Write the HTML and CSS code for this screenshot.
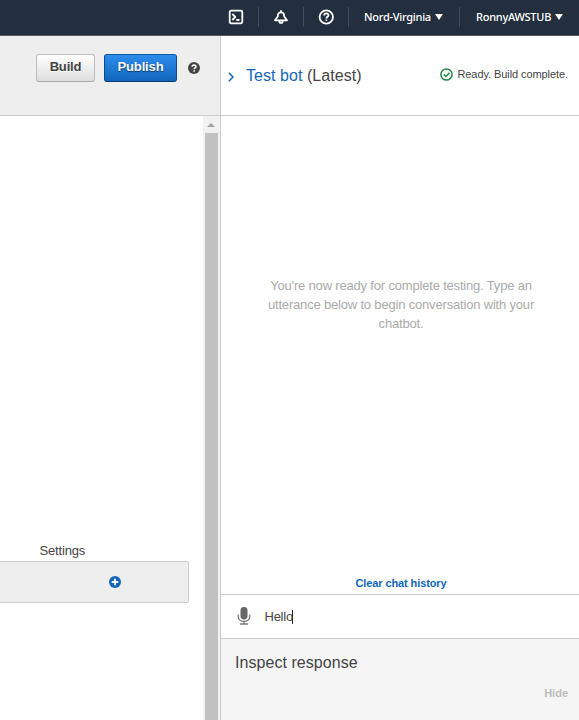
FILE: index.html
```html
<!DOCTYPE html>
<html lang="en">
<head>
<meta charset="utf-8">
<title>Test bot</title>
<link rel="stylesheet" href="styles.css">
</head>
<body>
<header class="topbar">
  <a class="nav-icon shell"><svg width="16" height="16" viewBox="0 0 16 16"><rect x="1.700" y="1.700" width="12.600" height="12.600" rx="1.500"/><path d="M4.300 5 7.300 8l-3 3M8.300 11h3.200"/></svg></a>
  <a class="nav-icon bell"><svg width="16" height="16" viewBox="0 0 16 16"><path d="M8 1.200v2M4.800 7.500C4.800 4.500 6 3.300 8 3.300s3.200 1.200 3.200 4.200L14 11.300H2zM6.300 12.200c0 2.300 3.400 2.300 3.400 0"/></svg></a>
  <a class="nav-icon help"><svg width="16" height="16" viewBox="0 0 16 16"><circle cx="8.300" cy="8" r="6.700"/><path d="M6.200 6.500c0-2.700 4.300-2.700 4.300-.2 0 1.500-2.100 1.500-2.100 3.100M8.400 10.600v1.300"/></svg></a>
  <a class="nav-text region"><span>Nord-Virginia</span><i class="caret"></i></a>
  <a class="nav-text account"><span>RonnyAWSTUB</span><i class="caret"></i></a>
</header>
<main class="workspace">
  <section class="editor">
    <div class="toolbar">
      <button class="btn">Build</button>
      <button class="btn primary">Publish</button>
      <svg class="info" width="12" height="12" viewBox="0 0 12 12"><circle cx="6" cy="6" r="6" fill="#444"/><path d="M4.100 4.700c0-2.400 3.900-2.300 3.900-.1C8 5.900 6.100 5.800 6.100 7.300M6.100 8.300v1.500" fill="none" stroke="#fff" stroke-width="1.500"/></svg>
    </div>
    <div class="canvas">
      <div class="content">
        <div class="settings-label">Settings</div>
        <div class="settings-row"><svg width="12" height="12" viewBox="0 0 12 12"><circle cx="6" cy="6" r="6" fill="#1166bb"/><path d="M6 2.700v6.600M2.700 6h6.600" stroke="#fff" stroke-width="1.800"/></svg></div>
      </div>
      <div class="scrollbar"><i class="arrow-up"></i><div class="thumb"></div></div>
    </div>
  </section>
  <aside class="tester">
    <div class="tester-head">
      <svg class="chevron" width="6" height="10" viewBox="0 0 6 10"><path d="M.8.8 5 5 .8 9.200" fill="none" stroke="#1166bb" stroke-width="1.500"/></svg>
      <h2><a>Test bot</a> (Latest)</h2>
      <div class="status"><svg width="13" height="13" viewBox="0 0 13 13"><circle cx="6.500" cy="6.500" r="5.600"/><path d="M3.800 6.500 5.900 8.500 9.500 4.700"/></svg><span>Ready. Build complete.</span></div>
    </div>
    <div class="chat">
      <p>You're now ready for complete testing. Type an<br>utterance below to begin conversation with your<br>chatbot.</p>
      <a class="clear">Clear chat history</a>
    </div>
    <div class="composer">
      <svg width="14" height="18" viewBox="0 0 14 18"><rect x="3.500" y="0" width="7" height="12.500" rx="3.400" fill="#666"/><path d="M1.200 7.500v2.200C1.200 16 12.800 16 12.800 9.700V7.500M7 14.300v2.400M3 17h8" fill="none" stroke="#777" stroke-width="1.300"/></svg>
      <span class="entry">Hello</span><i class="cursor"></i>
    </div>
    <div class="inspect">
      <h3>Inspect response</h3>
      <a class="hide">Hide</a>
    </div>
  </aside>
</main>
</body>
</html>
```
FILE: styles.css
```css
* { box-sizing: border-box; }
body { margin: 0; height: 720px; overflow: hidden; background: #fff; color: #444; font: 13px/19px "Liberation Sans", Arial, sans-serif; display: flex; flex-direction: column; }
svg { display: block; flex: none; }
h2, h3 { margin: 0; font-size: 16px; font-weight: normal; line-height: 20px; letter-spacing: 0.05px; }
.topbar { height: 36px; flex: none; background: #232f3e; border-bottom: 1px solid #55565d; display: flex; justify-content: flex-end; align-items: flex-start; padding-top: 7px; color: #fff; }
.topbar > a { height: 20px; display: flex; align-items: center; }
.topbar > a + a { border-left: 1px solid #444d59; }
.nav-icon { justify-content: center; width: 45px; }
.nav-icon svg { fill: none; stroke: #fff; stroke-width: 1.800; stroke-linejoin: round; }
.nav-text { font: 500 11px/18px "Noto Sans", sans-serif; letter-spacing: -0.26px; }
.nav-text span { white-space: nowrap; flex: none; margin-top: -1px; }
.region { width: 111px; padding-left: 15px; }
.region span { width: 67px; }
.account { width: 120px; padding-left: 16px; }
.account span { width: 75px; }
.caret { border: 4px solid transparent; border-top: 6px solid #fff; border-bottom: 0; margin-left: 4px; }
.workspace { display: flex; flex: 1; min-height: 0; }
.editor { width: 220px; flex: none; display: flex; flex-direction: column; }
.toolbar { height: 80px; flex: none; background: #eee; border-bottom: 1px solid #ccc; display: flex; align-items: flex-start; padding: 18px 0 0 36px; }
.btn { width: 59px; height: 28px; margin-right: 9px; padding: 0 0 3px; border: 1px solid #bbb; border-bottom-color: #aaa; border-radius: 3px; background: linear-gradient(#fff, #ddd); color: #444; font: bold 13px/20px "Liberation Sans", Arial, sans-serif; letter-spacing: -0.15px; text-shadow: 0 1px #fff; }
.primary { width: 73px; margin-right: 11px; border-color: #0f59a4 #0c4a8b #083b73; background: linear-gradient(#2d8cec, #1166bb); color: #fff; text-shadow: 0 1px 1px #063263; }
.info { margin-top: 8px; }
.canvas { display: flex; flex: 1; }
.content { width: 203px; padding-top: 425px; }
.settings-label { padding-left: 39.5px; height: 20px; letter-spacing: -0.16px; }
.settings-row { width: 189px; height: 42px; border: 1px solid #ccc; border-left: 0; border-radius: 0 2px 2px 0; background: #eee; padding: 14px 0 0 109px; }
.scrollbar { width: 17px; background: #f1f1f1; padding: 7px 2px 0; display: flex; flex-direction: column; }
.arrow-up { width: 0; margin-left: 2px; border: 4px solid transparent; border-bottom-color: #a3a3a3; border-top: 0; }
.thumb { flex: 1; margin-top: 6px; background: #c1c1c1; }
.tester { flex: 1; border-left: 1px solid #ccc; display: flex; flex-direction: column; }
.tester-head { height: 80px; border-bottom: 1px solid #ccc; display: flex; align-items: flex-start; padding: 30px 11px 0 7px; }
.chevron { margin-top: 6px; }
.tester-head h2 { margin-left: 12px; white-space: nowrap; }
.tester a { color: #1166bb; }
.status { margin-left: auto; display: flex; font-size: 11px; line-height: 17px; letter-spacing: -0.08px; white-space: nowrap; }
.status svg { fill: none; stroke: #1d8b46; stroke-width: 1.500; margin: 2px 4px 0 0; }
.chat { height: 479px; border-bottom: 1px solid #ccc; display: flex; flex-direction: column; align-items: center; text-align: center; padding: 160px 0 1px 2px; }
.chat p { margin: 0; color: #aaa; white-space: nowrap; letter-spacing: -0.18px; }
.chat .clear { margin-top: auto; font-size: 11px; font-weight: bold; line-height: 20px; letter-spacing: -0.1px; }
.composer { height: 44px; border-bottom: 1px solid #ccc; display: flex; align-items: flex-start; padding: 12px 0 0 16px; }
.entry { margin-left: 13.5px; letter-spacing: -0.25px; }
.cursor { width: 1px; height: 14px; background: #222; margin-top: 3px; margin-left: -1px; }
.inspect { flex: 1; background: #f5f5f5; padding: 14px 11px 0 14px; display: flex; flex-direction: column; }
.inspect .hide { align-self: flex-end; margin-top: 10px; color: #bbb; font-size: 11px; font-weight: bold; line-height: 20px; }
```
